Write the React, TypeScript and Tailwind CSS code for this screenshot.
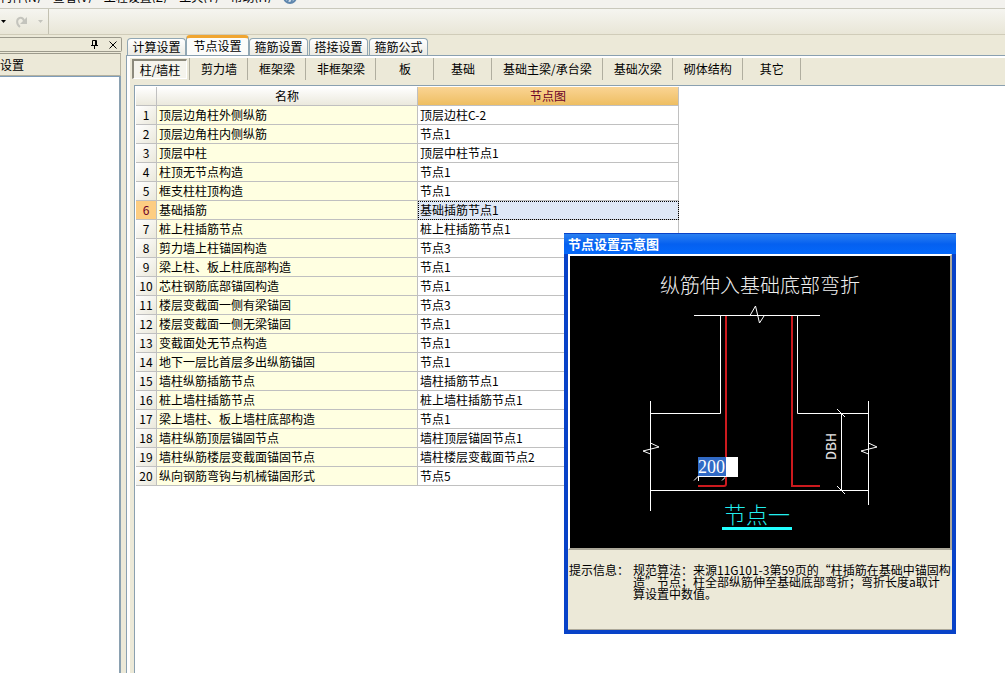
import clsx from 'clsx';

const menus = ['构件(N)', '查看(V)', '工程设置(Z)', '工具(T)', '帮助(H)'];

const tabs = ['计算设置', '节点设置', '箍筋设置', '搭接设置', '箍筋公式'];

const categories = [
  '剪力墙',
  '框架梁',
  '非框架梁',
  '板',
  '基础',
  '基础主梁/承台梁',
  '基础次梁',
  '砌体结构',
  '其它',
];

const rows: { name: string; node: string }[] = [
  { name: '顶层边角柱外侧纵筋', node: '顶层边柱C-2' },
  { name: '顶层边角柱内侧纵筋', node: '节点1' },
  { name: '顶层中柱', node: '顶层中柱节点1' },
  { name: '柱顶无节点构造', node: '节点1' },
  { name: '框支柱柱顶构造', node: '节点1' },
  { name: '基础插筋', node: '基础插筋节点1' },
  { name: '桩上柱插筋节点', node: '桩上柱插筋节点1' },
  { name: '剪力墙上柱锚固构造', node: '节点3' },
  { name: '梁上柱、板上柱底部构造', node: '节点1' },
  { name: '芯柱钢筋底部锚固构造', node: '节点1' },
  { name: '楼层变截面一侧有梁锚固', node: '节点3' },
  { name: '楼层变截面一侧无梁锚固', node: '节点1' },
  { name: '变截面处无节点构造', node: '节点1' },
  { name: '地下一层比首层多出纵筋锚固', node: '节点1' },
  { name: '墙柱纵筋插筋节点', node: '墙柱插筋节点1' },
  { name: '桩上墙柱插筋节点', node: '桩上墙柱插筋节点1' },
  { name: '梁上墙柱、板上墙柱底部构造', node: '节点1' },
  { name: '墙柱纵筋顶层锚固节点', node: '墙柱顶层锚固节点1' },
  { name: '墙柱纵筋楼层变截面锚固节点', node: '墙柱楼层变截面节点2' },
  { name: '纵向钢筋弯钩与机械锚固形式', node: '节点5' },
];

const selectedRow = 5;

function MenuBar() {
  return (
    <nav className="flex h-2 items-start gap-3 bg-[#f3f2ee]">
      <div className="flex h-[3px] items-end gap-3 overflow-hidden">
        {menus.map((menu) => (
          <button key={menu} className="h-3 shrink-0 leading-3">
            {menu}
          </button>
        ))}
      </div>
      <button aria-label="帮助中心" className="flex h-1 items-end overflow-hidden">
        <svg width="14" height="14" viewBox="0 0 14 14" className="shrink-0" fill="none">
          <circle cx="7" cy="7" r="6" fill="#d5e2ee" stroke="#5f86ad" strokeWidth="2" />
          <path d="M4 12l3-5M8 12l3-5" stroke="#5f86ad" strokeWidth="1.5" />
        </svg>
      </button>
    </nav>
  );
}

function Caret() {
  return (
    <svg width="5" height="3" viewBox="0 0 5 3" fill="currentColor">
      <path d="M0 0h5L2.500 3z" />
    </svg>
  );
}

function Toolbar() {
  return (
    <div className="flex h-[27px] border-y border-t-[#c9c8bc] border-b-[#d0ccb9] bg-linear-to-b from-[#f5f5f0] to-[#e9e6d7]">
      <div className="flex w-[49px] items-center border-r border-[#c3c1b1] pl-px">
        <button aria-label="撤销列表" className="text-black">
          <Caret />
        </button>
        <button aria-label="恢复" className="ml-2.5 text-[#c4c4bd]">
          <svg width="12" height="12" viewBox="0 0 12 12" fill="none">
            <path d="M4 11C0 8 .5 3 3.500 2 6 1 7.500 3 8 5" stroke="currentColor" strokeWidth="2" />
            <path d="M11 1v7H4z" fill="currentColor" />
          </svg>
        </button>
        <button aria-label="恢复列表" className="ml-2.5 text-[#c4c4bd]">
          <Caret />
        </button>
      </div>
    </div>
  );
}

function SidePanel() {
  return (
    <aside className="flex w-[122px] shrink-0 flex-col pt-0.5">
      <div className="flex h-[15px] items-center justify-end gap-2.5 rounded-r-xs border border-l-0 border-[#9c9a8c] pr-1">
        <button aria-label="固定">
          <svg width="9" height="9" viewBox="0 0 9 9" fill="none" stroke="#000">
            <path d="M2.500 5V.5h4V5M1 5.500h7M4.500 6v3M5.500 1v4" />
          </svg>
        </button>
        <button aria-label="关闭">
          <svg width="8" height="8" viewBox="0 0 8 8" fill="none" stroke="#000">
            <path d="M.5.5l7 7M7.500.5l-7 7" />
          </svg>
        </button>
      </div>
      <h2 className="mt-px mr-px flex h-[23px] items-center border border-l-0 border-t-[#9c9a8c] border-r-[#b5b2a0] border-b-[#b5b2a0]">
        设置
      </h2>
      <div className="mr-px grow border-t border-r-2 border-t-[#7f9db9] border-r-[#8aa0b0] bg-white" />
    </aside>
  );
}

function TabBar() {
  return (
    <div role="tablist" className="flex h-5 items-end gap-px pl-px">
      {tabs.map((tab, i) => (
        <button
          key={tab}
          role="tab"
          aria-selected={i === 1}
          className={clsx(
            'rounded-t-sm border border-b-0 leading-3',
            i === 1
              ? '-mx-px h-5 w-[63px] border-t-3 border-[#91a7b4] border-t-[#f0a530] bg-[#fcfcfa] pb-0.5'
              : 'h-[17px] w-[59px] border-[#91a7b4] bg-linear-to-b from-white to-[#ecebe4]',
          )}
        >
          {tab}
        </button>
      ))}
    </div>
  );
}

function CategoryBar() {
  return (
    <div className="flex h-[22px] items-stretch pl-0.5">
      <div className="flex border-r border-[#b0ae9f] pr-0.5">
        <button
          aria-pressed="true"
          className="my-px w-[55px] border-t-2 border-r border-b border-l-2 border-t-[#8c8a7c] border-r-white border-b-white border-l-[#8c8a7c] bg-[#f5f4ec] leading-3"
        >
          柱/墙柱
        </button>
      </div>
      {categories.map((category) => (
        <button
          key={category}
          className="min-w-[58px] border-r border-[#b0ae9f] pr-2.5 pl-[11px] leading-3 whitespace-nowrap"
        >
          {category}
        </button>
      ))}
    </div>
  );
}

function NodeTable() {
  return (
    <table className="w-[543px] table-fixed border-separate border-spacing-0">
      <colgroup>
        <col className="w-[21px]" />
        <col className="w-[261px]" />
        <col className="w-[261px]" />
      </colgroup>
      <thead>
        <tr className="h-[19px]">
          <th className="border-r border-b border-[#c0c0c0] bg-linear-to-b from-white to-[#ebe9dd] p-0" />
          <th className="border-r border-b border-[#c0c0c0] bg-linear-to-b from-white to-[#ebe9dd] p-0 font-normal">
            名称
          </th>
          <th className="border-r border-b border-[#c0c0c0] bg-linear-to-b from-[#fad493] to-[#eebe61] p-0 font-normal text-[#6b0028]">
            节点图
          </th>
        </tr>
      </thead>
      <tbody>
        {rows.map((row, i) => (
          <tr key={row.name} className="h-[19px]">
            <th
              className={clsx(
                'border-r border-b border-[#c0c0c0] p-0 font-normal',
                i === selectedRow
                  ? 'bg-[#fdcd82] text-[#6b0028]'
                  : 'bg-linear-to-br from-white to-[#eae8db]',
              )}
            >
              {i + 1}
            </th>
            <td className="border-r border-b border-[#c0c0c0] bg-[#ffffe1] p-0 pl-0.5">{row.name}</td>
            <td
              className={clsx(
                'border-r border-b border-[#c0c0c0] p-0 pl-0.5',
                i === selectedRow && 'bg-[#dfe8f6] outline-1 -outline-offset-1 outline-black outline-dotted',
              )}
            >
              {row.node}
            </td>
          </tr>
        ))}
      </tbody>
    </table>
  );
}

function NodeDrawing() {
  return (
    <svg viewBox="0 0 380 292" className="block w-full" fill="none">
      <text x="90" y="37" fontSize="20" fontWeight="300" fill="#f0f0f0">
        纵筋伸入基础底部弯折
      </text>

      {/* column and footing outline */}
      <g stroke="#fff">
        <path d="M124 59.500H250M180 59.500L185.500 50 189.500 67 194 60" />
        <path d="M150.500 59.500V157.500H80.500M227.500 59.500V157.500H298.500" />
        <path d="M80.500 145V255M80.500 187L89 191 73 195 80.500 198" />
        <path d="M298.500 145V249M298.500 187L307 191 291 195 298.500 198" />
        <path d="M80.500 234.500H298.500" />
        <path d="M271.500 157V235M267 153l8 8M267 230l8 8" />
        <path d="M128.500 220V225M124 224.500l5-5M152 224.500l5-5" />
      </g>

      <path d="M156 60V228Q156 230 154 230H128" stroke="#cc1a1e" strokeWidth="2" />
      <path d="M222 60V230H250" stroke="#cc1a1e" strokeWidth="2" />

      <text
        x="0"
        y="0"
        transform="translate(266 204) rotate(-90)"
        className="font-['Liberation_Mono',monospace]"
        fontSize="15"
        fill="#e8e8e8"
      >
        DBH
      </text>

      <text x="154" y="267" fontSize="22" fontWeight="300" fill="#22eeee">
        节点一
      </text>
      <path d="M152 272.500H222" stroke="#22ffff" strokeWidth="3" />
    </svg>
  );
}

function NodeDialog() {
  return (
    <section
      role="dialog"
      aria-label="节点设置示意图"
      className="absolute top-[233px] left-[564px] w-[392px] border-4 border-t-0 border-[#0842c8] bg-[#ece9d8]"
    >
      <h1 className="-mx-1 flex h-[21px] items-center border-t border-[#0842c8] bg-linear-to-b from-[#2a80f0] via-[#0560f0] to-[#0468fa] pl-1 text-[13px] font-bold text-white">
        节点设置示意图
      </h1>
      <div className="relative border-2 border-t-white border-r-[#aca899] border-b-[#aca899] border-l-white bg-black">
        <NodeDrawing />
        <input
          aria-label="弯折长度"
          defaultValue="200"
          className="absolute top-[201px] left-32 h-5 w-10 border-b border-white bg-white bg-linear-to-r from-[#316ac5] from-70% to-white to-70% font-['Liberation_Serif',serif] text-lg leading-5 text-white outline-none"
        />
      </div>
      <div className="flex h-20 border-b border-[#aca899] pt-3.5 pl-px leading-3 whitespace-nowrap">
        <span className="w-16 shrink-0">提示信息：</span>
        <p>
          规范算法：来源11G101-3第59页的“柱插筋在基础中锚固构
          <br />
          造”节点；柱全部纵筋伸至基础底部弯折；弯折长度a取计
          <br />
          算设置中数值。
        </p>
      </div>
    </section>
  );
}

export default function App() {
  return (
    <div
      lang="zh-CN"
      className="relative flex min-h-screen flex-col overflow-hidden bg-[#ece9d8] font-['Noto_Sans_CJK_SC',sans-serif] text-xs leading-3 text-black"
    >
      <MenuBar />
      <Toolbar />
      <div className="flex grow gap-1">
        <SidePanel />
        <main className="flex min-w-0 grow flex-col">
          <TabBar />
          <div className="flex grow flex-col border-t border-l border-[#8aa0b0]">
            <div className="flex grow flex-col gap-[5px] border-t-2 border-l-3 border-white">
              <CategoryBar />
              <div className="ml-1 grow border-t border-l border-[#8aa0b0] bg-white pt-px pl-px">
                <NodeTable />
              </div>
            </div>
          </div>
        </main>
      </div>
      <NodeDialog />
    </div>
  );
}
